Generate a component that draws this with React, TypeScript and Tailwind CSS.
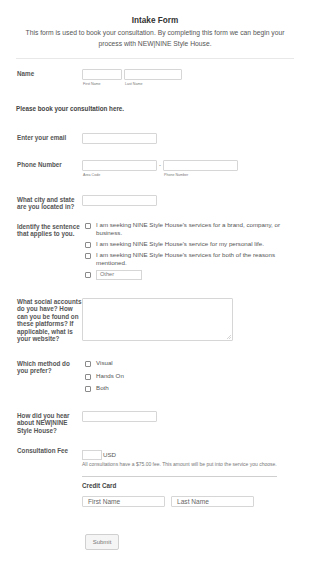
import React from 'react'

const FONT = "font-['Liberation_Sans',Arial,sans-serif]"

function Label({ lines, pt = 'pt-px' }: { lines: string[]; pt?: string }) {
  return (
    <div className={`w-[66px] shrink-0 pl-px ${pt} text-[6.3px] leading-[7.4px] font-bold text-[#555]`}>
      {lines.map((l) => (
        <span key={l} className="block whitespace-nowrap">
          {l}
        </span>
      ))}
    </div>
  )
}

function Box({ className = '' }: { className?: string }) {
  return <div className={`h-[11px] border border-[#d6d6d6] rounded-[1px] bg-white ${className}`} />
}

function Check() {
  return <span className="mt-[2px] ml-[3px] h-[6px] w-[6px] shrink-0 rounded-[1px] border border-[#8a8a8a] bg-white" />
}

function Option({ lines }: { lines: string[] }) {
  return (
    <div className="flex gap-[5px]">
      <Check />
      <div className="text-[6.2px] leading-[7.5px] text-[#555]">
        {lines.map((l) => (
          <span key={l} className="block whitespace-nowrap">
            {l}
          </span>
        ))}
      </div>
    </div>
  )
}

export default function App() {
  return (
    <div className={`min-h-[568px] bg-white px-4 ${FONT}`}>
      <div className="pt-[16px] text-center">
        <h1 className="text-[8.2px] leading-[10px] font-bold text-[#333]">Intake Form</h1>
        <p className="mt-px text-[6.75px] leading-[11px] text-[#555]">
          <span className="block whitespace-nowrap">
            This form is used to book your consultation. By completing this form we can begin your
          </span>
          <span className="block whitespace-nowrap">process with NEW|NINE Style House.</span>
        </p>
      </div>
      <div className="mt-[9px] border-t border-[#e8e8e8]" />

      {/* name */}
      <div className="mt-[10px] flex h-[35px]">
        <Label lines={['Name']} />
        <div className="flex gap-[2px]">
          <div>
            <Box className="w-[40px]" />
            <div className="mt-px pl-px text-[3.6px] leading-[6px] text-[#777]">First Name</div>
          </div>
          <div>
            <Box className="w-[58px]" />
            <div className="mt-px pl-px text-[3.6px] leading-[6px] text-[#777]">Last Name</div>
          </div>
        </div>
      </div>

      <div className="h-[29px] text-[6.3px] leading-[9px] font-bold text-[#444]">
        Please book your consultation here.
      </div>

      {/* email */}
      <div className="flex h-[27px]">
        <Label lines={['Enter your email']} />
        <Box className="w-[75px]" />
      </div>

      {/* phone */}
      <div className="flex h-[35px]">
        <Label lines={['Phone Number']} />
        <div className="flex">
          <div>
            <Box className="w-[75px]" />
            <div className="mt-px pl-px text-[3.6px] leading-[6px] text-[#777]">Area Code</div>
          </div>
          <span className="w-[6px] text-center text-[6px] leading-[11px] text-[#666]">-</span>
          <div>
            <Box className="w-[75px]" />
            <div className="mt-px pl-px text-[3.6px] leading-[6px] text-[#777]">Phone Number</div>
          </div>
        </div>
      </div>

      {/* city */}
      <div className="flex h-[26px]">
        <Label lines={['What city and state', 'are you located in?']} />
        <Box className="w-[75px]" />
      </div>

      {/* sentence */}
      <div className="flex h-[77px]">
        <Label lines={['Identify the sentence', 'that applies to you.']} pt="pt-[2px]" />
        <div className="flex flex-col gap-[3.5px]">
          <Option lines={["I am seeking NINE Style House's services for a brand, company, or", 'business.']} />
          <Option lines={["I am seeking NINE Style House's service for my personal life."]} />
          <Option lines={["I am seeking NINE Style House's services for both of the reasons", 'mentioned.']} />
          <div className="flex items-center gap-[5px]">
            <span className="ml-[3px] h-[6px] w-[6px] rounded-[1px] border border-[#8a8a8a] bg-white" />
            <div className="flex h-[10px] w-[46px] items-center border border-[#d6d6d6] pl-[3px] text-[5.6px] text-[#777]">
              Other
            </div>
          </div>
        </div>
      </div>

      {/* social */}
      <div className="flex h-[61px]">
        <Label
          lines={[
            'What social accounts',
            'do you have? How',
            'can you be found on',
            'these platforms? If',
            'applicable, what is',
            'your website?',
          ]}
          pt="pt-0"
        />
        <div className="relative h-[43px] w-[151px] border border-[#d6d6d6] rounded-[1px]">
          <svg className="absolute right-px bottom-px" width="4" height="4" viewBox="0 0 4 4">
            <path d="M4 0L0 4M4 2L2 4" stroke="#aaa" strokeWidth="0.5" />
          </svg>
        </div>
      </div>

      {/* method */}
      <div className="flex h-[52px]">
        <Label lines={['Which method do', 'you prefer?']} />
        <div className="flex flex-col gap-[4.5px]">
          <Option lines={['Visual']} />
          <Option lines={['Hands On']} />
          <Option lines={['Both']} />
        </div>
      </div>

      {/* how */}
      <div className="flex h-[35px]">
        <Label lines={['How did you hear', 'about NEW|NINE', 'Style House?']} />
        <Box className="w-[75px]" />
      </div>

      {/* fee */}
      <div className="flex">
        <Label lines={['Consultation Fee']} />
        <div className="pt-[4px]">
          <div className="flex items-center">
            <div className="h-[10px] w-[20px] border border-[#d6d6d6]" />
            <span className="pl-px text-[6.2px] leading-[10px] text-[#555]">USD</span>
          </div>
          <div className="mt-px whitespace-nowrap text-[5px] leading-[6px] text-[#777]">
            All consultations have a $75.00 fee. This amount will be put into the service you choose.
          </div>
          <div className="mt-[9px] w-[195px] border-t border-[#cfcfcf]" />
          <div className="mt-[5px] text-[6.3px] leading-[8px] font-bold text-[#444]">Credit Card</div>
          <div className="mt-[6px] flex gap-[6px]">
            <div className="flex h-[11px] w-[83px] items-center border border-[#d6d6d6] rounded-[1px] pl-[5px] text-[6.6px] text-[#666]">
              First Name
            </div>
            <div className="flex h-[11px] w-[83px] items-center border border-[#d6d6d6] rounded-[1px] pl-[5px] text-[6.6px] text-[#666]">
              Last Name
            </div>
          </div>
          <button
            type="button"
            className="mt-[27px] ml-[3px] h-[16px] w-[34px] rounded-[2px] border border-[#d0d0d0] bg-[#f5f5f5] text-[6px] text-[#777]"
          >
            Submit
          </button>
        </div>
      </div>
    </div>
  )
}
